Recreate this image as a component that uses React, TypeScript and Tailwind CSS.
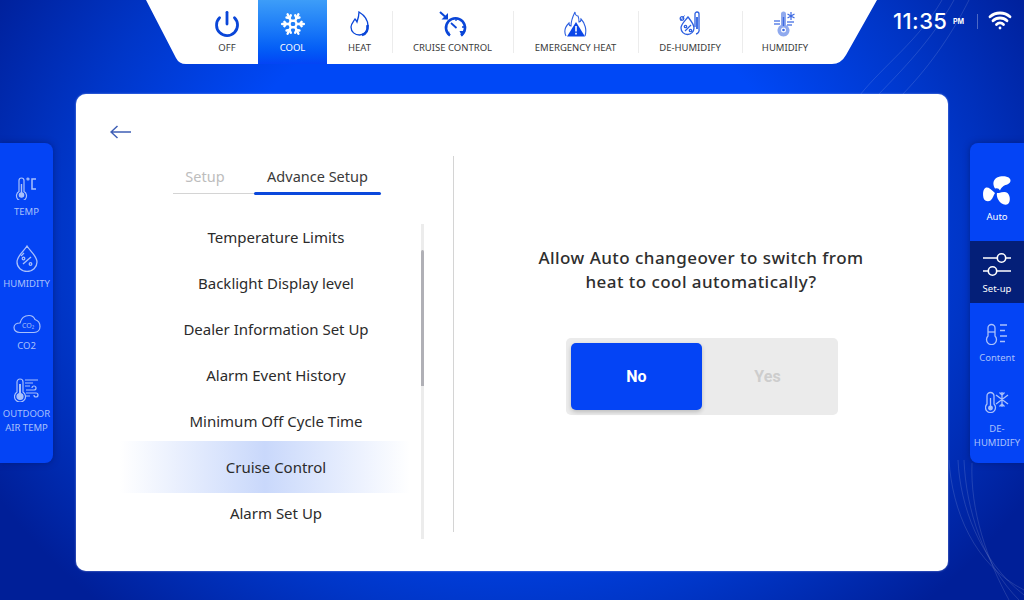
import React from "react";
import { Power, Snowflake, Wifi } from "lucide-react";

const HeatIcon = () => (
  <svg width="22" height="26" viewBox="0 0 22 26" fill="none" stroke="#0a46d8" strokeWidth="1.3">
    <path d="M10 1c5 3 9 8 9 14 0 5-4 9-8.500 9S2 21 2 16c0-3 2-5 4-8 1 1 1.500 2 2 3 1-3 2-6 2-10z" />
    <path d="M13 24c4-1 6-5 5.500-10" strokeWidth="2.600" />
  </svg>
);

const CruiseIcon = () => (
  <svg width="28" height="26" viewBox="0 0 28 26" fill="none" stroke="#0a46d8" strokeWidth="2.600">
    <path d="M1 1l5 4.500" strokeWidth="2" />
    <path d="M2.500 8.500h6.500V2z" fill="#0a46d8" stroke="none" />
    <path d="M11 24.500a9.500 9.500 0 1 1 11 0" />
    <path d="M12 12l5.500 5" strokeWidth="1.700" />
    <path d="M20.500 20h6l-3.500 5.500z" fill="#0a46d8" stroke="none" />
    <path d="M8 23l3 1.500-1-4.500z" fill="#0a46d8" stroke="none" />
    <path d="M17 7.500v2.500M23 16h2" strokeWidth="1.300" />
  </svg>
);

const EmergencyIcon = () => (
  <svg width="24" height="26" viewBox="0 0 24 26" fill="none">
    <path
      d="M2 25c-2-4-1-9 3-13 0 2 1 3 2 3 0-5 2-10 4-14 0 3 2 4 3 4 1 2 1 4 1 6 1 0 2-1 2-3 4 4 6 11 4 17"
      stroke="#2c5fe0"
      strokeWidth="1.100"
    />
    <path d="M12 11l9 14.500H3z" fill="#0a46e8" />
    <path d="M11.200 15h1.600v5.500h-1.600zM11.200 21.800h1.600v1.600h-1.600z" fill="#fff" />
  </svg>
);

const DeHumidifyIcon = () => (
  <svg width="22" height="26" viewBox="0 0 22 26" fill="none" stroke="#2c5fe0" strokeWidth="1.300">
    <path d="M9 6c3 4 6 7 6 11a6.500 6.500 0 0 1-13 0c0-4 4-7 7-11z" />
    <path d="M6 20l6-6" />
    <circle cx="6.500" cy="15.500" r="1.200" />
    <circle cx="11.500" cy="19.500" r="1.200" />
    <path d="M16 16V3a2 2 0 0 1 4 0v15a4 4 0 0 1-3 5" />
    <path d="M18 6v12" strokeWidth="1.800" />
    <circle cx="3" cy="7.500" r="1.800" />
    <path d="M1.500 9.500l4-5" strokeWidth="1" />
  </svg>
);

const HumidifyIcon = () => (
  <svg width="24" height="26" viewBox="0 0 24 26" fill="none">
    <path d="M8 14V3a2.500 2.500 0 0 1 5 0v11a6 6 0 1 1-5 0z" fill="#8fa9ee" />
    <circle cx="10.500" cy="19" r="2.500" fill="#fff" />
    <circle cx="10.500" cy="19" r="1.300" fill="#3e6ae2" />
    <path d="M10.500 6v9" stroke="#3e6ae2" strokeWidth="1.400" />
    <path d="M1 10h6M1 13h6M14 11h7M14 14h5" stroke="#5f84e8" strokeWidth="1.300" />
    <path d="M18 1v8M14.500 3l7 4M21.500 3l-7 4" stroke="#3e6ae2" strokeWidth="1.200" />
  </svg>
);

const ThermoC = () => (
  <svg width="24" height="24" viewBox="0 0 24 24" fill="none" stroke="#a9c0fb" strokeWidth="1.200">
    <path d="M4 14V3a2.500 2.500 0 0 1 5 0v11a5 5 0 1 1-5 0z" transform="translate(0 1.500)" />
    <circle cx="6.500" cy="19" r="2.200" fill="#a9c0fb" />
    <path d="M6.500 8v10" strokeWidth="1.400" />
    <circle cx="13" cy="3" r="1" />
    <path d="M21 3h-4v10h4" strokeWidth="1.500" />
  </svg>
);

const DropPercent = () => (
  <svg width="24" height="28" viewBox="0 0 24 28" fill="none" stroke="#a9c0fb" strokeWidth="1.300">
    <path d="M12 2c3 5 10 10 10 16a10 9.500 0 0 1-20 0C2 12 9 7 12 2z" />
    <path d="M8 20l8-7" />
    <circle cx="8.500" cy="14.500" r="1.300" />
    <circle cx="15.500" cy="20" r="1.300" />
    <path d="M6 12l3-3" />
  </svg>
);

const CloudCo2 = () => (
  <svg width="28" height="20" viewBox="0 0 28 20" fill="none" stroke="#a9c0fb" strokeWidth="1.200">
    <path d="M7 18.500C3 18.500 1 16 1 13.500S3.500 9 7 9c1-4 4-7.500 9-7.500 3 0 5 1.500 6 4 3 1 5 4 5 7s-2 6-6 6z" />
    <text x="9" y="13.500" fontSize="7" fill="#a9c0fb" stroke="none" fontFamily="Noto Sans, sans-serif">
      CO₂
    </text>
  </svg>
);

const OutdoorTemp = () => (
  <svg width="26" height="24" viewBox="0 0 26 24" fill="none" stroke="#a9c0fb" strokeWidth="1.200">
    <path d="M3 13V3a3 3 0 0 1 6 0v10a5.500 5.500 0 1 1-6 0z" transform="translate(0 1)" />
    <circle cx="6" cy="18.500" r="3" fill="#a9c0fb" />
    <path d="M6 6v12" strokeWidth="2" />
    <path d="M11 2h13M11 5h8M11 8h5M12 12h8a2 2 0 1 0-2-2M12 15h10a2 2 0 1 1-2 2M12 18h4" />
  </svg>
);

const FanIcon = () => (
  <svg width="28" height="29" viewBox="0 0 28 29" fill="#fff">
    <path d="M12 12.500C9 8 10 2 17 .5c5-1 10.500.5 10.500 4 0 4-5 4-7 5.500-1.500 1-3 3-3.500 4.500a4 4 0 0 0-5-2z" />
    <path d="M12 17C8 13 5.500 11 3 11.500 0 12.500-.5 18 .5 22c1 3.500 5 4 7 2.500 2.500-2 3-5.500 4.500-7.500z" />
    <path d="M16 17c3-.8 6.500-1.500 8.500 0 3 2.500 3 9 .5 11-3.500 2-8-1-9.500-4-1.500-2.500-2-5.500-1.500-7z" />
  </svg>
);

const SlidersIcon = () => (
  <svg width="28" height="25" viewBox="0 0 28 25" fill="none" stroke="#fff" strokeWidth="1.600">
    <path d="M0 6h14M23 6h5" />
    <circle cx="18.500" cy="6" r="4.200" />
    <path d="M0 19h5M14 19h14" />
    <circle cx="9.500" cy="19" r="4.200" />
  </svg>
);

const ContentIcon = () => (
  <svg width="24" height="22" viewBox="0 0 24 22" fill="none" stroke="#a9c0fb" strokeWidth="1.300">
    <path d="M3 12V4a3.500 3.500 0 0 1 7 0v8a5 5 0 1 1-7 0z" transform="translate(0 1)" />
    <path d="M3 9h7" />
    <path d="M15 2h7M15 7.500h5M15 13h7M15 18.500h5" />
  </svg>
);

const DeHumidifyRail = () => (
  <svg width="24" height="22" viewBox="0 0 24 22" fill="none" stroke="#a9c0fb" strokeWidth="1.300">
    <path d="M2 12V4a3.500 3.500 0 0 1 7 0v8a5 5 0 1 1-7 0z" transform="translate(0 1)" />
    <circle cx="5.500" cy="17" r="1.800" fill="#a9c0fb" />
    <path d="M5.500 7v9" />
    <path d="M17 1v15M11 4l12 9M23 4L11 13M14.500 1.500L17 4l2.500-2.500M14.500 15.500L17 13l2.500 2.500" />
  </svg>
);

const TopItem = ({
  label,
  width,
  divider,
  active,
  children,
}: {
  label: string;
  width: string;
  divider?: boolean;
  active?: boolean;
  children: React.ReactNode;
}) => (
  <div
    className={`${width} h-full flex flex-col items-center relative ${
      active ? "bg-gradient-to-b from-[#3d9df8] to-[#0444f5] text-white" : "text-[#3a3a3a]"
    }`}
  >
    {divider && <div className="absolute left-0 top-[11px] bottom-[11px] w-px bg-[#ececec]" />}
    <div className="h-[36px] mt-[6px] flex items-center justify-center">{children}</div>
    <span className="text-[9.500px] leading-[13px] mt-[-1px] whitespace-nowrap">{label}</span>
  </div>
);

const RailItem = ({
  label,
  height,
  gap = "mt-[5px]",
  dim = true,
  active,
  children,
}: {
  label: React.ReactNode;
  height: string;
  gap?: string;
  dim?: boolean;
  active?: boolean;
  children: React.ReactNode;
}) => (
  <div
    className={`${height} flex flex-col items-center justify-end text-center text-[9.500px] leading-[14px] ${
      dim ? "text-[#a9c0fb]" : "text-white"
    } ${active ? "bg-[#041f78]" : ""}`}
  >
    {children}
    <span className={gap}>{label}</span>
  </div>
);

const menu = [
  "Temperature Limits",
  "Backlight Display level",
  "Dealer Information Set Up",
  "Alarm Event History",
  "Minimum Off Cycle Time",
  "Cruise Control",
  "Alarm Set Up",
];

export default function App() {
  return (
    <div className="font-['Noto_Sans',sans-serif] relative w-[1024px] h-[600px] overflow-hidden flex flex-col bg-[radial-gradient(ellipse_600px_500px_at_50%_40%,#0048f6_50%,#0036c8_75%,#001f98_100%)]">
      {/* thin arcs behind the clock and down the right side */}
      <svg
        className="absolute right-0 top-0"
        width="200"
        height="600"
        viewBox="0 0 200 600"
        fill="none"
        stroke="#fff"
        strokeOpacity="0.18"
        strokeWidth="0.7"
      >
        <path d="M118 0C95 40 60 65 36 95" />
        <path d="M130 0C108 40 78 70 54 95" />
        <path d="M145 0C125 40 102 70 78 95" />
        <path d="M146 285l8-3M146 298l8-2" />
        <path d="M125 460C128 510 150 565 200 590" />
        <path d="M134 460C136 505 155 560 200 595" />
        <path d="M140 460C142 510 160 565 195 600" />
        <path d="M148 463C146 510 163 560 185 600" />
      </svg>

      {/* top row */}
      <div className="relative flex h-[64px] shrink-0">
        <div className="relative ml-[146px] w-[731px] h-full flex pl-[50px] shrink-0">
          <svg className="absolute inset-0" width="731" height="64" viewBox="0 0 731 64">
            <path d="M0 0H731L700 55Q695 64 686 64H40Q33 64 30 58Z" fill="#fff" />
          </svg>
          <div className="relative flex h-full">
            <TopItem label="OFF" width="w-[62px]">
              <Power size={28} color="#0a46d8" strokeWidth={2.4} />
            </TopItem>
            <TopItem label="COOL" width="w-[69px]" active>
              <Snowflake size={26} color="#fff" strokeWidth={2.2} />
            </TopItem>
            <TopItem label="HEAT" width="w-[65px]">
              <HeatIcon />
            </TopItem>
            <TopItem label="CRUISE CONTROL" width="w-[121px]" divider>
              <CruiseIcon />
            </TopItem>
            <TopItem label="EMERGENCY HEAT" width="w-[125px]" divider>
              <EmergencyIcon />
            </TopItem>
            <TopItem label="DE-HUMIDIFY" width="w-[104px]" divider>
              <DeHumidifyIcon />
            </TopItem>
            <TopItem label="HUMIDIFY" width="w-[86px]" divider>
              <HumidifyIcon />
            </TopItem>
          </div>
        </div>

        {/* clock */}
        <div className="ml-[16px] h-[42px] flex items-center text-white font-['Inter',sans-serif]">
          <span className="w-[55px] text-[22px] leading-[24px] font-medium tracking-[0.4px] whitespace-nowrap">11:35</span>
          <span className="w-[13px] ml-[5px] mt-[3px] text-[7px] font-bold">PM</span>
          <span className="w-px h-[15px] bg-white/30 ml-[11px]" />
          <Wifi size={24} color="#fff" strokeWidth={2.8} className="ml-[10px] mt-[-2px]" />
        </div>
      </div>

      {/* body */}
      <div className="relative flex-1 flex items-start">
        {/* left rail */}
        <div className="w-[53px] h-[320px] mt-[79px] bg-[#0444f5] rounded-r-[8px] shadow-[0_0_6px_rgba(0,20,90,0.5)] flex flex-col pt-[25px] shrink-0">
          <RailItem label="TEMP" height="h-[51px]">
            <ThermoC />
          </RailItem>
          <RailItem label="HUMIDITY" height="h-[72px]">
            <DropPercent />
          </RailItem>
          <RailItem label="CO2" height="h-[62px]">
            <CloudCo2 />
          </RailItem>
          <RailItem label={<>OUTDOOR<br />AIR TEMP</>} height="h-[82px]">
            <OutdoorTemp />
          </RailItem>
        </div>

        {/* card */}
        <div className="ml-[23px] mt-[30px] w-[872px] h-[477px] bg-white rounded-[10px] shadow-[0_0_2px_rgba(200,220,255,0.7)] flex shrink-0 text-[#2b2b2b]">
          <div className="w-[345px] flex flex-col shrink-0">
            <svg className="mt-[31px] ml-[34px]" width="22" height="14" viewBox="0 0 22 14" fill="none" stroke="#3f5fb5" strokeWidth="1.500">
              <path d="M21 7H1M7.500 1L1 7l6.500 6" />
            </svg>
            <div className="mt-[27px] ml-[97px] w-[208px] flex border-b border-[#d4d4d4] h-[28px] text-[14.500px] leading-[20px]">
              <div className="w-[81px] text-center text-[#bdbdbd] pr-[17px]">Setup</div>
              <div className="w-[127px] text-center text-[#3a3a3a] relative">
                Advance Setup
                <div className="absolute left-0 right-0 bottom-[-2px] h-[3px] rounded-full bg-[#0b48dc]" />
              </div>
            </div>
            <div className="mt-[20px] ml-[44px] w-[290px] flex flex-col text-[15px]">
              {menu.map((item) => (
                <div
                  key={item}
                  className={`flex items-center justify-center pl-[22px] ${
                    item === "Cruise Control"
                      ? "bg-gradient-to-r from-white via-[#c9d8fb] to-white h-[52px] my-[-3px]"
                      : "h-[46px]"
                  }`}
                >
                  {item}
                </div>
              ))}
            </div>
          </div>
          {/* scrollbar */}
          <div className="w-[3px] h-[315px] mt-[130px] bg-[#ececec] shrink-0">
            <div className="mt-[26px] w-full h-[136px] bg-[#b0b0b6] rounded-t-[2px]" />
          </div>
          <div className="w-px h-[376px] mt-[62px] ml-[29px] bg-[#d4d4d4] shrink-0" />
          <div className="flex-1 flex flex-col items-center">
            <p className="mt-[152px] w-[350px] text-center text-[17px] leading-[24px] font-medium text-[#2e2e2e] tracking-[0.45px]">
              Allow Auto changeover to switch from heat to cool automatically?
            </p>
            <div className="mt-[44px] ml-[2px] w-[272px] h-[77px] bg-[#ebebeb] rounded-[5px] p-[5px] flex font-['Roboto',sans-serif] font-bold text-[16px]">
              <div className="w-[131px] h-full rounded-[5px] bg-[#0444f5] text-white flex items-center justify-center shadow-[0_2px_4px_rgba(0,0,0,0.2)]">
                No
              </div>
              <div className="flex-1 flex items-center justify-center text-[#cdcdcd]">Yes</div>
            </div>
          </div>
        </div>

        {/* right rail */}
        <div className="ml-auto w-[54px] h-[320px] mt-[79px] bg-[#0444f5] rounded-l-[8px] shadow-[0_0_6px_rgba(0,20,90,0.5)] flex flex-col shrink-0">
          <RailItem label="Auto" height="h-[98px] pb-[17px]" dim={false}>
            <FanIcon />
          </RailItem>
          <RailItem label="Set-up" height="h-[62px] pb-[7px]" dim={false} active>
            <SlidersIcon />
          </RailItem>
          <RailItem label="Content" height="h-[62px]" gap="mt-[6px]">
            <ContentIcon />
          </RailItem>
          <RailItem label={<>DE-<br />HUMIDIFY</>} height="h-[85px]" gap="mt-[9px]">
            <DeHumidifyRail />
          </RailItem>
        </div>
      </div>
    </div>
  );
}
